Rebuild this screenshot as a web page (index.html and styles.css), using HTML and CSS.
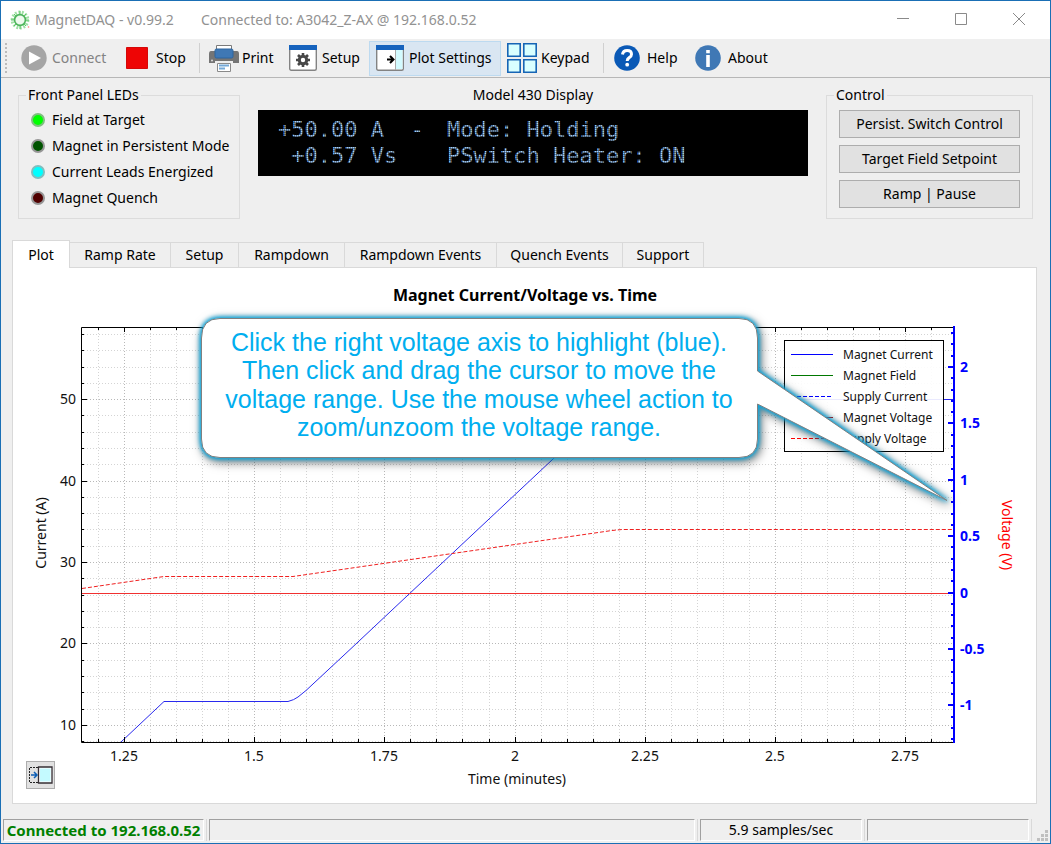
FILE: index.html
```html
<!DOCTYPE html>
<html lang="en">
<head>
<meta charset="utf-8">
<title>MagnetDAQ - v0.99.2</title>
<link rel="stylesheet" href="styles.css">
</head>
<body>
<div class="window">
  <header class="titlebar">
    <svg class="app-icon" width="20" height="20" viewBox="0 0 20 20" aria-hidden="true">
      <circle cx="10" cy="10" r="7.6" fill="none" stroke="#9fe0a4" stroke-width="3.6" stroke-dasharray="1.8 1.6"/>
      <circle cx="10" cy="10" r="5.4" fill="#eefaee" stroke="#4cb45a" stroke-width="1.6"/>
      <path d="M4 4l2 2M16 4l-2 2M4 16l2-2M14 14l2 2M10 1v3M10 16v3M1 10h3M16 10h3" stroke="#5cc46a"/>
      <circle cx="18.500" cy="17" r=".8" fill="#f77"/>
    </svg>
    <span class="app-name">MagnetDAQ - v0.99.2</span>
    <span class="app-host">Connected to: A3042_Z-AX @ 192.168.0.52</span>
    <div class="window-controls">
      <button aria-label="Minimize"><svg width="14" height="14" viewBox="0 0 14 14"><path d="M1 5.500h12"/></svg></button>
      <button aria-label="Maximize"><svg width="14" height="14" viewBox="0 0 14 14"><path d="M1.500.5h11v11h-11z"/></svg></button>
      <button aria-label="Close"><svg width="14" height="14" viewBox="0 0 14 14"><path d="M1 0l12 12M13 0L1 12"/></svg></button>
    </div>
  </header>

  <nav class="toolbar" aria-label="Main toolbar">
    <span class="grip"></span>
    <button class="tool connect" disabled>
      <svg width="26" height="26" viewBox="0 0 26 26"><circle cx="13" cy="13" r="12.700" fill="#a5a5a5"/><path d="M8 6.500L20 13L8 19.500z" fill="#fff"/></svg>Connect
    </button>
    <button class="tool stop">
      <svg width="22" height="22" viewBox="0 0 22 22"><path d="M.5.5h21v21H.5z" fill="#ee0505" stroke="#d40808"/></svg>Stop
    </button>
    <span class="separator"></span>
    <button class="tool print">
      <svg width="30" height="28" viewBox="0 0 30 28">
        <path d="M7.500 7V1.500h15V7" fill="#fff" stroke="#7a7a7a"/>
        <path d="M2 7h4v6h18V7h4q2 0 2 3v9h-6v-2H6v2H0v-9q0-3 2-3z" fill="#757575"/>
        <rect x="6" y="5" width="18" height="9" rx="1.500" fill="#3f78b5" stroke="#2c659f"/>
        <path d="M8.500 19.500h13v8h-13z" fill="#fff" stroke="#8a8a8a"/>
        <path d="M10 21.500h10M10 24.500h6" stroke="#75a9d8" stroke-width="2"/>
        <circle cx="3" cy="16.500" r="1" fill="#ddd"/>
      </svg>Print
    </button>
    <button class="tool setup">
      <svg width="28" height="26" viewBox="0 0 28 26">
        <rect x=".7" y="1" width="26.600" height="24.300" rx="1.500" fill="#fff" stroke="#838383" stroke-width="1.400"/>
        <path d="M0 0h28v5H0z" fill="#1663bd"/>
        <path d="M14 8v14M7 15h14M9 10l10 10M19 10L9 20" stroke="#484848" stroke-width="2.600"/>
        <circle cx="14" cy="15" r="3.700" fill="#fff" stroke="#484848" stroke-width="3"/>
      </svg>Setup
    </button>
    <button class="tool plot-settings active" aria-pressed="true">
      <svg width="28" height="26" viewBox="0 0 28 26">
        <rect x=".7" y="1" width="26.600" height="24.300" rx="1.500" fill="#fff" stroke="#838383" stroke-width="1.400"/>
        <path d="M20 5h6.500v19H20z" fill="#d3fbff"/><path d="M19.500 5v20" stroke="#aaa"/>
        <path d="M0 0h28v5H0z" fill="#1663bd"/>
        <path d="M11 14.500h6M14 11l3.500 3.500L14 18" fill="none" stroke="#000" stroke-width="2"/>
      </svg>Plot Settings
    </button>
    <button class="tool keypad">
      <svg width="30" height="30" viewBox="0 0 30 30"><path d="M.8.8h12.400v12.400H.8zM16.800.8h12.400v12.400H16.800zM.8 16.800h12.400v12.400H.8zM16.800 16.800h12.400v12.400H16.800z" fill="#d9ffff" stroke="#1765b5" stroke-width="1.600"/></svg>Keypad
    </button>
    <span class="separator"></span>
    <button class="tool help">
      <svg width="26" height="26" viewBox="0 0 26 26"><circle cx="13" cy="13" r="12.800" fill="#0a59b6"/><path d="M8.500 9.500Q9 5.500 13.200 5.500Q17.500 5.500 17.500 9.200Q17.500 11.300 15.200 12.600Q13.200 13.800 13.200 16" fill="none" stroke="#fff" stroke-width="3"/><circle cx="13.200" cy="19.700" r="1.900" fill="#fff"/></svg>Help
    </button>
    <button class="tool about">
      <svg width="26" height="26" viewBox="0 0 26 26"><circle cx="13" cy="13" r="12.800" fill="#3f78b5"/><path d="M11.200 5h3.600v3.200h-3.600zM11.200 10h3.600v12h-3.600z" fill="#fff"/></svg>About
    </button>
  </nav>

  <main class="content">
    <section class="panels">
      <fieldset class="group leds">
        <legend>Front Panel LEDs</legend>
        <ul>
          <li><i class="led led-target"></i>Field at Target</li>
          <li><i class="led led-persistent"></i>Magnet in Persistent Mode</li>
          <li><i class="led led-energized"></i>Current Leads Energized</li>
          <li><i class="led led-quench"></i>Magnet Quench</li>
        </ul>
      </fieldset>
      <section class="display">
        <h2>Model 430 Display</h2>
        <div class="lcd">
          <span>+50.00 A  -</span><span>Mode: Holding</span>
          <span> +0.57 Vs</span><span>PSwitch Heater: ON</span>
        </div>
      </section>
      <fieldset class="group control">
        <legend>Control</legend>
        <button>Persist. Switch Control</button>
        <button>Target Field Setpoint</button>
        <button>Ramp | Pause</button>
      </fieldset>
    </section>

    <section class="tabs">
      <div class="tablist" role="tablist">
        <button role="tab" class="tab w-plot selected" aria-selected="true">Plot</button>
        <button role="tab" class="tab w-rate">Ramp Rate</button>
        <button role="tab" class="tab w-setup">Setup</button>
        <button role="tab" class="tab w-rampdown">Rampdown</button>
        <button role="tab" class="tab w-rampdown-events">Rampdown Events</button>
        <button role="tab" class="tab w-quench">Quench Events</button>
        <button role="tab" class="tab w-support">Support</button>
      </div>
      <div class="tabpane" role="tabpanel">
        <svg class="chart" viewBox="13 268 1023 535" role="img" aria-label="Magnet Current/Voltage vs. Time">
          <text class="chart-title" x="525" y="301">Magnet Current/Voltage vs. Time</text>
          <g id="grid"></g>
          <path class="line current" d="M121 742L164 701.500H288Q294 700 298 697L306 690.500L350 649.500L440 565L553 459L617 399.500H953"/>
          <path class="line supply" d="M82 588.500L164 576.500H293L300 575.500L612 530.500L622 529.500H953"/>
          <path class="line voltage" d="M82 593.500H953"/>
          <path class="frame" d="M954 327.500H81.500V742.500H954"/>
          <g id="ticks"></g>
          <path class="axis-right" d="M954 326V743"/>
          <g id="labels"></g>
          <text class="axis-title" x="517" y="784">Time (minutes)</text>
          <text class="axis-title" transform="translate(46 533) rotate(-90)">Current (A)</text>
          <text class="axis-title red" transform="translate(1002 535) rotate(90)">Voltage (V)</text>
          <g class="legend">
            <rect x="784.500" y="340.500" width="159" height="111"/>
            <path class="key blue" d="M791 354.500h42"/><path class="key green" d="M791 375.500h42"/>
            <path class="key blue dashed" d="M791 396.500h42"/><path class="key dark-red" d="M791 417.500h42"/>
            <path class="key bright-red dashed" d="M791 438.500h42"/>
            <text x="843" y="359">Magnet Current</text>
            <text x="843" y="380">Magnet Field</text>
            <text x="843" y="401">Supply Current</text>
            <text x="843" y="422">Magnet Voltage</text>
            <text x="843" y="443">Supply Voltage</text>
          </g>
          <g class="callout">
            <path d="M220 318.500H739Q757.500 318.500 757.500 338V371L947 500.500L757.500 404V439Q757.500 457.500 739 457.500H220Q201.500 457.500 201.500 439V338Q201.500 318.500 220 318.500z"/>
            <text x="479" y="351">Click the right voltage axis to highlight (blue).</text>
            <text x="479" y="379">Then click and drag the cursor to move the</text>
            <text x="479" y="408">voltage range. Use the mouse wheel action to</text>
            <text x="479" y="436">zoom/unzoom the voltage range.</text>
          </g>
        </svg>
        <button class="panel-toggle" aria-label="Toggle settings panel">
          <svg width="24" height="18" viewBox="0 0 24 18"><path d="M9 1.500H.5v15H9" fill="none" stroke="#222" stroke-dasharray="2 1"/><path d="M9.500 1h13.500v16H9.500z" fill="#fff" stroke="#352f35" stroke-width="1.300"/><path d="M11 2.500h10.500v13H11z" fill="#c4faff"/><path d="M2 9h5M5 6l3 3-3 3" fill="none" stroke="#0d5eb5" stroke-width="1.500"/></svg>
        </button>
      </div>
    </section>
  </main>

  <footer class="statusbar">
    <div class="cell connection">Connected to 192.168.0.52</div>
    <div class="cell message"></div>
    <div class="cell rate">5.9 samples/sec</div>
    <div class="cell extra"></div>
    <svg class="size-grip" width="11" height="11" viewBox="0 0 11 11" aria-hidden="true"><path d="M8 0h3v3H8zM8 4h3v3H8zM4 4h3v3H4zM8 8h3v3H8zM4 8h3v3H4zM0 8h3v3H0z" fill="#bfbfbf"/></svg>
  </footer>
</div>
<script src="chart.js"></script>
</body>
</html>
```
FILE: styles.css
```css
* { box-sizing: border-box; }
body {
  margin: 0;
  font: 14px/20px "Noto Sans", "Open Sans", sans-serif;
  color: #000;
}
button { font: inherit; color: inherit; margin: 0; }
.window {
  display: flex;
  flex-direction: column;
  min-height: 100vh;
  background: #efefef;
  border: 1px solid #1a6fb5;
}

.titlebar {
  display: flex;
  align-items: center;
  height: 38px;
  padding-left: 9px;
  background: #fff;
  color: #929292;
}
.app-name { margin-left: 5px; width: 166px; white-space: nowrap; }
.window-controls { display: flex; margin-left: auto; padding-right: 2px; }
.window-controls button {
  display: grid;
  place-items: center;
  width: 58px;
  height: 36px;
  padding: 0;
  border: 0;
  background: none;
}
.window-controls svg { fill: none; stroke: #8a8a8a; }

.toolbar {
  display: flex;
  align-items: center;
  height: 39px;
  padding-left: 4px;
  border-bottom: 1px solid #b7b7b7;
}
.grip { width: 9px; height: 30px; border-left: 2px dotted #bbb; }
.separator { width: 1px; height: 30px; background: #d0d0d0; }
.separator + .tool { margin-left: 2px; }
.tool {
  display: flex;
  align-items: center;
  gap: 5px;
  height: 35px;
  padding: 0 0 0 6px;
  border: 1px solid transparent;
  background: none;
  white-space: nowrap;
}
.tool svg { flex: none; }
.tool.active { background: #d9e6f2; border-color: #bddaf0; }
.connect { width: 105px; color: #838383; }
.stop { width: 80px; gap: 8px; }
.print { width: 80px; gap: 3px; }
.setup { width: 87px; }
.plot-settings { width: 132px; }
.keypad { width: 102px; gap: 4px; padding-left: 5px; }
.toolbar .help { width: 81px; gap: 7px; margin-left: 3px; }
.about { gap: 7px; }

.content {
  display: flex;
  flex: 1;
  flex-direction: column;
  gap: 21px;
  padding: 7px 13px 14px 11px;
}
.panels {
  display: flex;
  gap: 18px;
  padding: 0 4px 0 6px;
}
.group {
  height: 134px;
  min-width: 0;
  margin: 0;
  border: 1px solid #dcdcdc;
}
.group legend { padding: 0 2px; }
.leds { width: 222px; padding: 2px 8px 2px 12px; }
.leds legend { margin-left: -5px; }
.leds ul { margin: 0; padding: 0; list-style: none; }
.leds li { display: flex; align-items: center; gap: 7px; height: 26px; white-space: nowrap; }
.led { width: 14px; height: 14px; border: 2px solid #969696; border-radius: 50%; }
.led-target { background: #0f0; border-color: #7fbf7f; }
.led-persistent { background: #005300; }
.led-energized { background: #0ff; border-color: #7fbfbf; }
.led-quench { background: #500000; }

.display { flex: 1; min-width: 0; }
.display h2 { margin: 0 0 5px; font: inherit; text-align: center; }
.lcd {
  position: relative;
  display: grid;
  grid-template-columns: 169px 1fr;
  align-content: start;
  height: 66px;
  padding: 7px 0 0 20px;
  background: #000;
  color: #a3d0ff;
  font: 22px/26px "DejaVu Sans Mono", monospace;
  white-space: pre;
}
.lcd::after {
  content: "";
  position: absolute;
  inset: 0;
  background:
    repeating-linear-gradient(to right, rgba(0, 0, 0, .36) 0 1px, transparent 1px 2px),
    repeating-linear-gradient(to bottom, rgba(0, 0, 0, .36) 0 1px, transparent 1px 2px);
}

.control {
  display: flex;
  flex-direction: column;
  gap: 7px;
  width: 207px;
  padding: 5px 12px;
}
.control legend { margin-left: -5px; }
.control button {
  height: 28px;
  padding: 0;
  border: 1px solid #adadad;
  background: #e1e1e1;
}

.tabs { display: flex; flex: 1; flex-direction: column; }
.tablist { display: flex; align-items: flex-end; height: 28px; margin-bottom: -1px; }
.tab {
  position: relative;
  height: 26px;
  padding: 0;
  border: 1px solid #d9d9d9;
  border-left: 0;
  background: #efefef;
  white-space: nowrap;
}
.tab.selected { height: 28px; z-index: 1; border-left: 1px solid #d9d9d9; border-bottom: 0; background: #fff; }
.w-plot { width: 58px; }
.w-rate { width: 101px; }
.w-setup { width: 68px; }
.w-rampdown { width: 106px; }
.w-rampdown-events { width: 152px; }
.w-quench { width: 126px; }
.w-support { width: 81px; }
.tabpane { position: relative; flex: 1; border: 1px solid #d9d9d9; background: #fff; }

.chart { display: block; width: 100%; }
.chart text { fill: #111; }
.chart .chart-title { font-size: 16px; font-weight: 700; text-anchor: middle; fill: #000; }
.axis-title { text-anchor: middle; }
.chart .red { fill: #f00; }
.line { fill: none; stroke-width: 1; }
.current { stroke: #2929ee; }
.supply { stroke: #f02020; stroke-dasharray: 4 2; }
.voltage { stroke: #f03030; }
.frame { fill: none; stroke: #000; }
.grid-line { stroke: #d4d4d4; stroke-dasharray: 1 2; }
.grid-line.major { stroke: #b8b8b8; }
.tick { stroke: #000; }
.tick-right { stroke: #00f; stroke-width: 2; }
.axis-right { stroke: #00f; stroke-width: 2; }
.label-x { text-anchor: middle; }
.label-y { text-anchor: end; }
.chart .label-right { fill: #00f; font-size: 14px; font-weight: 700; }
.legend { font-size: 12px; }
.legend rect { fill: #fff; fill-opacity: .9; stroke: #000; }
.key { stroke-width: 1; }
.blue { stroke: #00f; }
.green { stroke: #007800; }
.dark-red { stroke: #c00000; }
.bright-red { stroke: #f00; }
.dashed { stroke-dasharray: 4 2; }
.callout path {
  fill: #fff;
  stroke: #808080;
  filter: drop-shadow(0 0 2px #0aa5dc) drop-shadow(0 0 2px #0aa5dc) drop-shadow(2px 3px 4px rgba(0, 0, 0, .5));
}
.chart .callout text { fill: #00aeef; font: 25px "Liberation Sans", Arial, sans-serif; text-anchor: middle; }

.panel-toggle {
  position: absolute;
  left: 13px;
  bottom: 14px;
  display: grid;
  place-items: center;
  width: 29px;
  height: 28px;
  padding: 0;
  border: 1px solid #adadad;
  background: #e1e1e1;
}

.statusbar {
  display: flex;
  align-items: flex-start;
  gap: 5px;
  height: 25px;
  padding: 1px 2px 0;
}
.cell {
  height: 22px;
  border: 1px solid;
  border-color: #a0a0a0 #fff #fff #a0a0a0;
  line-height: 20px;
  text-align: center;
  white-space: nowrap;
  box-shadow: 2px 0 0 #efefef, 3px 0 0 #d9d9d9;
}
.connection { width: 201px; color: #008000; font-size: 15px; font-weight: 700; }
.message { flex: 1; }
.rate { width: 162px; }
.extra { width: 162px; }
.size-grip { align-self: flex-end; margin: 0 0 2px 3px; }
```
FILE: chart.js
```js
const SVG_NS = "http://www.w3.org/2000/svg";
const area = { left: 81, right: 953, top: 327, bottom: 742 };

function add(groupId, tag, className, attributes, content) {
  const node = document.createElementNS(SVG_NS, tag);
  node.setAttribute("class", className);
  for (const [name, value] of Object.entries(attributes)) node.setAttribute(name, value);
  if (content !== undefined) node.textContent = content;
  document.getElementById(groupId).appendChild(node);
}

// Time axis: five minor steps for each quarter of a minute.
for (let step = -1; step <= 31; step++) {
  const x = Math.floor(124.3 + step * 26.05) + 0.5;
  const major = step % 5 === 0;
  const length = major ? 5 : 3;
  add("grid", "path", major ? "grid-line major" : "grid-line", { d: `M${x} ${area.top}V${area.bottom}` });
  add("ticks", "path", "tick", { d: `M${x} ${area.top}v${length}M${x} ${area.bottom}v${-length}` });
  if (major) add("labels", "text", "label-x", { x: Math.floor(x), y: 761 }, 1.25 + step * 0.05);
}

// Current axis: five minor steps for each 10 A.
for (let step = -4; step <= 21; step++) {
  const y = Math.floor(399.7 + step * 16.28) + 0.5;
  const major = step % 5 === 0;
  add("grid", "path", major ? "grid-line major" : "grid-line", { d: `M${area.left} ${y}H${area.right}` });
  add("ticks", "path", "tick", { d: `M${area.left} ${y}h${major ? 6 : 3}` });
  if (major) add("labels", "text", "label-y", { x: 76, y: Math.floor(y) + 5 }, 50 - step * 2);
}

// Voltage axis: five minor steps for each 0.5 V.
for (let step = -3; step <= 33; step++) {
  const y = Math.round(367 + step * 11.28);
  const major = step % 5 === 0;
  add("ticks", "path", "tick-right", { d: `M954 ${y}h${major ? -6 : -3}` });
  if (major) add("labels", "text", "label-right", { x: 960, y: y + 5 }, 2 - step * 0.1);
}
```
